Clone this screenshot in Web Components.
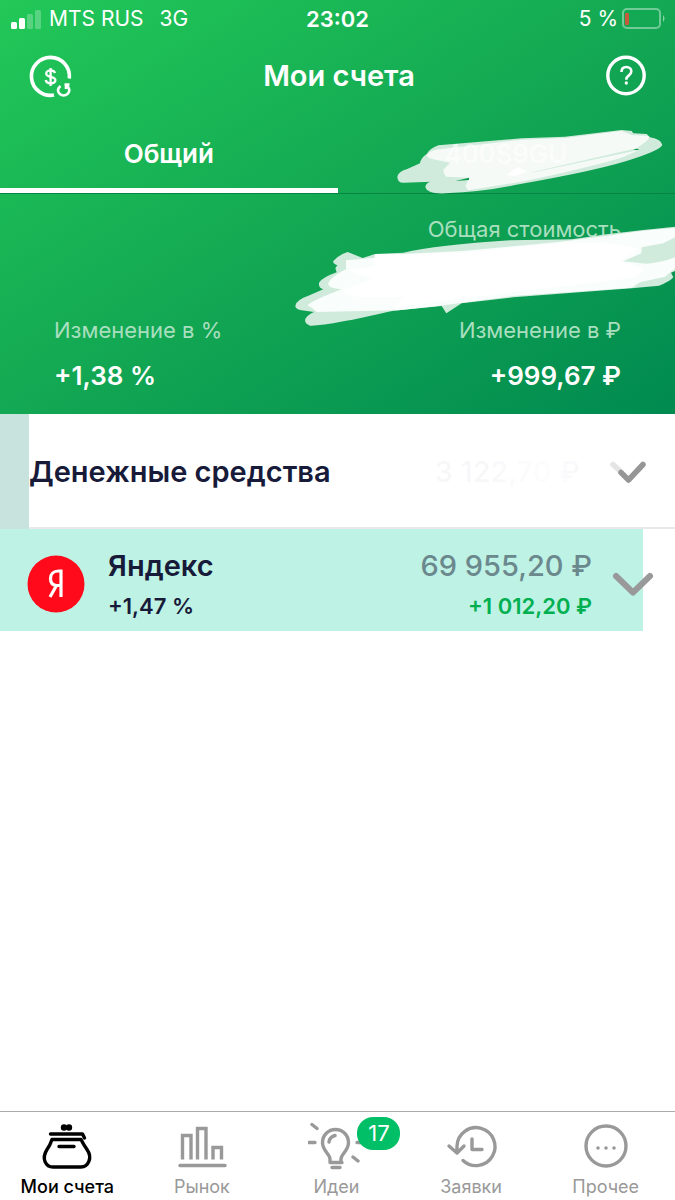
<!DOCTYPE html>
<html lang="ru">
<head>
<meta charset="utf-8">
<meta name="viewport" content="width=device-width, initial-scale=1">
<title>Мои счета</title>
<style>
  body { margin: 0; background: #fff; font-family: Inter, "Liberation Sans", sans-serif; }
</style>
</head>
<body>
<accounts-app></accounts-app>

<script>
const define = (name, html) => {
  const template = document.createElement('template');
  template.innerHTML = `<style>*{box-sizing:border-box}button{font:inherit;color:inherit;background:none;border:0;padding:0;margin:0}svg{display:block}</style>` + html;
  customElements.define(name, class extends HTMLElement {
    constructor() {
      super();
      this.attachShadow({ mode: 'open' }).append(template.content.cloneNode(true));
    }
  });
};

define('status-bar', `
<style>
  :host { display: grid; grid-template-columns: 1fr auto 1fr; align-items: center; height: 37px; padding: 0 10px; font-size: 21px; line-height: 24px; color: #fff; }
  .side { display: flex; align-items: center; gap: 8px; font-weight: 400; white-space: pre; }
  .net { margin-left: 8px; }
  .time { font-weight: 600; font-size: 22px; }
  .end { justify-content: flex-end; gap: 4px; }
</style>
<div class="side">
  <svg width="31" height="20" viewBox="0 0 31 20" fill="#fff"><rect x="1" y="13" width="6" height="7" rx="1.5"/><rect x="9" y="9" width="6" height="11" rx="1.5"/><rect x="17" y="5" width="6" height="15" rx="1.5" opacity=".25"/><rect x="25" y="1" width="6" height="19" rx="1.5" opacity=".25"/></svg>
  <span>MTS RUS</span><span class="net">3G</span>
</div>
<span class="time">23:02</span>
<div class="side end">
  <span>5 %</span>
  <svg width="43" height="21" viewBox="0 0 43 21" fill="none"><rect x="1" y="1" width="37" height="19" rx="4" stroke="#fff" stroke-opacity=".4" stroke-width="2"/><path d="M41 7q3 3.500 0 7z" fill="#fff" fill-opacity=".5"/><rect x="3" y="5" width="4" height="12" rx="1" fill="#c55a3d"/></svg>
</div>`);

define('title-bar', `
<style>
  :host { display: flex; align-items: center; justify-content: space-between; height: 78px; padding: 0 28px; color: #fff; }
  h1 { margin: 0; font-size: 29px; line-height: 36px; font-weight: 600; }
</style>
<button aria-label="Пополнить">
  <svg width="45" height="45" viewBox="0 0 45 45" fill="none" stroke="#fff"><path d="M41.300 24.500A19 19 0 1 0 26 41" stroke-width="3.600"/><path d="M32.500 32q-2.500 2-2.500 4.500a5.700 5.700 0 0 0 11.300 0q0-3-2.800-5M36.500 30.500h5M38 31v4" stroke-width="2.600"/><path d="M27 19c-.6-2-2.500-2.600-4.500-2.600s-4.300 1-4.300 3.200c0 4.600 9.200 1.800 9.200 6.500 0 2.200-2.300 3.300-4.700 3.300S18.200 28.300 17.700 26M22.600 14v18" stroke-width="2.300"/></svg>
</button>
<h1>Мои счета</h1>
<button aria-label="Помощь">
  <svg width="42" height="42" viewBox="0 0 42 42" fill="none" stroke="#fff"><circle cx="21" cy="20.500" r="18.200" stroke-width="3.400"/><path d="M16.500 17c0-3.500 2-5 4.900-5s4.900 1.800 4.900 4.500c0 4.200-4.900 4-4.900 7.500v.8" stroke-width="2.600"/><circle cx="21.300" cy="28" r=".9" stroke-width="1.500" fill="#fff"/></svg>
</button>`);

define('account-tabs', `
<style>
  :host { display: grid; grid-template-columns: 1fr 1fr; height: 79px; font-size: 26px; line-height: 32px; color: #fff; border-bottom: 1px solid #078443; }
  button { position: relative; padding-top: 4px; border-bottom: 5px solid transparent; }
  .on { font-weight: 600; border-color: #fff; }
  .off { font-weight: 500; }
  .mark { position: absolute; right: 0; top: 0; }
  .name { position: relative; opacity: .6; }
</style>
<button class="on" role="tab" aria-selected="true">Общий</button>
<button class="off" role="tab" aria-selected="false">
  <svg class="mark" width="340" height="80" viewBox="0 345 1020 240">
    <path fill="#d0ebdc" d="M187 530Q190 515 215 508L255 490Q257 474 275 462Q285 445 310 436L560 415L690 410L860 390L890 393L895 400L935 402L945 412Q980 419 982 435Q975 450 900 475Q800 510 540 555Q450 575 330 580Q275 582 271 560Q275 545 290 545L205 548Q187 548 187 530Z"/>
    <path fill="#f5faf7" d="M275 465Q290 448 320 447L560 419L690 414L860 393L890 405L940 408Q945 415 935 423L905 445L610 512L572 522L912 450L860 473Q750 505 560 545L400 571Q387 565 402 533L333 530Q325 520 325 510L345 488L305 480Q275 475 275 465Z"/>
    <path fill="#f5faf7" d="M330 528L402 533L600 514L572 524L720 497L600 533L390 560L405 533Z"/>
    <path fill="#109c50" d="M361 543L402 533V540ZM895 450Q908 443 912 450Z"/>
    <path fill="#fff" d="M515 525L548 500L576 515L540 528Z"/>
  </svg>
  <span class="name">400S9GU</span>
</button>`);

define('portfolio-summary', `
<style>
  :host { display: block; position: relative; height: 220px; padding: 19px 54px 0; color: #fff; }
  dl { margin: 0; display: grid; grid-template-columns: 1fr 1fr; row-gap: 63px; }
  .r { text-align: right; }
  .total { grid-column: 1 / -1; height: 38px; }
  dt { font-size: 22px; line-height: 32px; color: #a9dfbf; }
  dd { margin: 12px 0 0; font-size: 26px; line-height: 36px; font-weight: 600; }
  svg { position: absolute; right: 0; top: 6px; }
</style>
<dl>
  <div class="r total"><dt>Общая стоимость</dt></div>
  <div><dt>Изменение в %</dt><dd>+1,38 %</dd></div>
  <div class="r"><dt>Изменение в ₽</dt><dd>+999,67 ₽</dd></div>
</dl>
<svg width="395" height="130" viewBox="0 0 1185 390" aria-hidden="true">
  <path fill="#d0ebdc" d="M46 317Q48 300 85 287L130 268Q113 262 118 247Q128 232 170 217L166 205L172 196Q157 190 160 183Q175 165 203 156L248 174L285 162L370 158Q470 135 690 121L875 118Q980 100 1185 80V213L1173 218L1180 232Q1170 245 1137 257L1055 265L700 292L545 310L499 340L485 318L340 332Q240 355 190 364Q120 378 90 377Q72 370 76 357Q82 345 102 336L60 330Q46 326 46 317Z"/>
  <path fill="#f9fdfb" d="M83 316Q95 302 185 268Q140 264 145 248Q160 225 198 208L198 181L285 173V162L370 162L555 152L835 126L980 108Q1090 90 1185 84V112L1150 130L1085 142L1084 160L1030 184L1100 191Q1150 187 1185 172V205L1155 230L1080 247L1055 263L700 288L480 317L355 331L110 336L97 325Z"/>
  <path fill="#fff" d="M190 270Q220 258 280 235L200 210L280 200L285 165L550 158L860 128L970 130L1075 145L1020 184L1090 205Q1090 220 1050 235L700 276L430 310L340 325L370 292L230 290Q190 285 190 270Z"/>
</svg>`);

define('cash-row', `
<style>
  :host { display: flex; align-items: center; height: 115px; padding: 0 28px 0 0; border-left: 29px solid #c8e2dd; background: linear-gradient(#e9e9ed, #e9e9ed) bottom / 100% 2px no-repeat; color: #171a38; }
  h2 { flex: 1; margin: 0; font-size: 29px; line-height: 36px; font-weight: 600; white-space: nowrap; }
  .sum { font-size: 29px; line-height: 36px; font-weight: 500; margin-right: 29px; color: transparent; background: linear-gradient(90deg, #f7f7f9 35%, #fbfbfd 55%, #fcfcfd 80%, #f8f8fb); background-clip: text; -webkit-background-clip: text; }
</style>
<h2>Денежные средства</h2>
<span class="sum">3 122,70 ₽</span>
<button aria-label="Развернуть">
  <svg width="38" height="24" viewBox="0 0 38 24" fill="none" stroke-linecap="round" stroke-linejoin="round" stroke-width="5.500"><path d="M4 4.500L10 10" stroke="#e4e4e4"/><path d="M12 12.500L19.500 20L34 4.500" stroke="#969696"/></svg>
</button>`);

define('stock-row', `
<style>
  :host { display: flex; align-items: center; height: 102px; padding: 8px 20px 0 27px; color: #171a38; background: linear-gradient(#bef2e5, #bef2e5) left / calc(100% - 32px) 100% no-repeat; }
  .info { flex: 1; margin-left: 23px; }
  .value { text-align: right; margin-right: 19px; color: #6b888d; }
  h2, .big { margin: 0; font-size: 29px; line-height: 40px; font-weight: 600; }
  .value .big { font-weight: 500; }
  .small { font-size: 22px; line-height: 32px; font-weight: 600; margin: 4px 0 0; }
  .gain { color: #00b050; }
</style>
<svg width="58" height="58" viewBox="0 0 58 58" fill="none"><circle cx="29" cy="29" r="28.500" fill="#ff0a1a"/><path d="M34 42V16h-2.500c-5 0-8 3-8 7.500 0 5 3 7 6.500 7h4M29.500 30.500L23 42" stroke="#fff" stroke-width="3.200"/></svg>
<div class="info"><h2>Яндекс</h2><p class="small">+1,47 %</p></div>
<div class="value"><p class="big">69 955,20 ₽</p><p class="small gain">+1 012,20 ₽</p></div>
<button aria-label="Развернуть">
  <svg width="44" height="28" viewBox="0 0 44 28" fill="none" stroke="#999" stroke-width="6" stroke-linecap="round" stroke-linejoin="round"><path d="M5 6L22 22.500L39 6"/></svg>
</button>`);

define('nav-item', `
<style>
  :host { display: block; }
  a { position: relative; display: flex; flex-direction: column; align-items: center; height: 88px; padding-top: 8px; color: #999; text-decoration: none; font-size: 18px; line-height: 24px; }
  :host([current]) a { color: #000; font-weight: 500; }
  .label { margin-top: 3px; }
</style>
<a href="#"><slot name="icon"></slot><span class="label"><slot></slot></span><slot name="badge"></slot></a>`);

define('count-badge', `
<style>
  :host { position: absolute; left: calc(50% + 21px); top: 5px; min-width: 43px; height: 33px; border-radius: 16px; background: #00bf66; color: #fff; font-size: 22px; line-height: 33px; text-align: center; }
</style><slot></slot>`);

define('bottom-nav', `
<style>
  :host { display: block; border-top: 1px solid #aaa; background: #fff; }
  nav { display: grid; grid-template-columns: repeat(5, 1fr); padding-right: 2px; }
  nav-item > svg { width: 56px; height: 52px; fill: none; stroke: #999; stroke-width: 3.4; stroke-linecap: round; stroke-linejoin: round; }
  nav-item[current] > svg { stroke: #000; }
</style>
<nav>
  <nav-item current>
    <svg slot="icon" viewBox="0 0 56 52"><path d="M11.500 14H43.500l2 4"/><path d="M13 19.500H42Q44.500 24.500 48 29.500C54 38 49 47 42 47H14C7 47 2 39 8 29.500Q11 25.500 13 19.500ZM20 26.500H35"/><circle cx="25" cy="7.500" r="1.500" fill="#000"/><circle cx="30" cy="7.500" r="1.500" fill="#000"/></svg>Мои счета</nav-item>
  <nav-item>
    <svg slot="icon" viewBox="0 0 56 52"><path d="M6 45.500H51"/><g style="stroke-linecap:butt;stroke-linejoin:miter"><path d="M8.500 39.500V15.500H17V39.500M23.500 39.500V8.500H32V39.500M39 39.500V27.500H47.500V39.500"/></g></svg>Рынок</nav-item>
  <nav-item>
    <svg slot="icon" viewBox="0 0 56 52"><path d="M22 41.500V39C22 34 14.500 31 14.500 22.500A13 13 0 0 1 40.500 22.500C40.500 31 33 34 33 39V41.500M22 42.500H34M24 47.500H32M21 22Q21.500 17 27 15.500M4 4.500L9 8.500M1 22.500H7M49 22.500H55M45 37L50 41"/></svg>Идеи<count-badge slot="badge">17</count-badge></nav-item>
  <nav-item>
    <svg slot="icon" viewBox="0 0 56 52"><path d="M14 30V26A19 19 0 1 1 20 40.500M6 26L14 33L21 26M29 19V29.500H39"/></svg>Заявки</nav-item>
  <nav-item>
    <svg slot="icon" viewBox="0 0 56 52"><circle cx="28" cy="26" r="20"/><g fill="#999" stroke="none"><circle cx="20" cy="28" r="1.800"/><circle cx="28" cy="28" r="1.800"/><circle cx="36" cy="28" r="1.800"/></g></svg>Прочее</nav-item>
</nav>`);

define('accounts-app', `
<style>
  :host { display: flex; flex-direction: column; min-height: 100vh; }
  header { background: linear-gradient(to bottom right, #22c858, #13a853 50%, #008a50); }
  main { flex: 1; }
</style>
<header><status-bar></status-bar><title-bar></title-bar><account-tabs></account-tabs><portfolio-summary></portfolio-summary></header>
<main><cash-row></cash-row><stock-row></stock-row></main>
<bottom-nav></bottom-nav>`);
</script>
</body>
</html>
